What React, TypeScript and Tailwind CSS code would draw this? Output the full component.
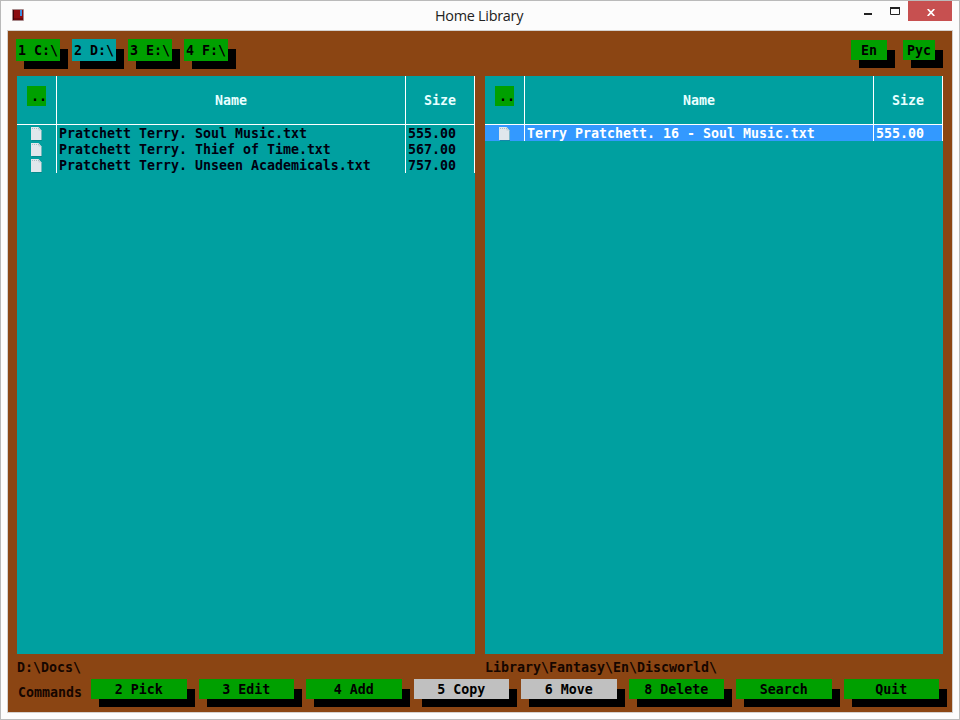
type Row = { name: string; size: string; selected?: boolean };

function KeyButton({ label, face, shade, color }: { label: string; face: string; shade: string; color: string }) {
  return (
    <button className={`relative block ${face}`}>
      <span className={`absolute left-2 top-[10px] w-full bg-black ${shade}`} />
      <span className={`relative flex h-full w-full items-center justify-center whitespace-pre pt-0.5 ${color}`}>{label}</span>
    </button>
  );
}

function FileIcon() {
  return (
    <svg width="13" height="14" viewBox="0 0 13 14" className="ml-[13px] mt-0.5">
      <path d="M2 2h8l2 2v10H2z" fill="#087c80" opacity=".65" />
      <path d="M1 0h7.5L11.5 3.5V13H1z" fill="#e0e7ec" />
      <path d="M8.5 0 11.5 3.5H8.5z" fill="#c4d2d8" />
      <path d="M2 1.5h7" stroke="#a9bcc2" strokeDasharray="1 1" />
    </svg>
  );
}

function Panel({ rows }: { rows: Row[] }) {
  return (
    <section className="h-[578px] w-[458px] bg-[#00a0a0]">
      <div className="grid h-[49px] grid-cols-[40px_349px_69px] border-b border-white text-[#e8ffff]">
        <div className="border-r border-white pl-[10px] pt-[10px]">
          <button className="block h-5 w-[19px] whitespace-pre bg-[#00a000] pl-[4px] text-left leading-5 text-black"><span className="block h-5 w-4 pt-px leading-[19px]">..</span></button>
        </div>
        <div className="border-r border-white pt-px text-center leading-[48px]">Name</div>
        <div className="border-r border-white pt-px text-center leading-[48px]">Size</div>
      </div>
      {rows.map((r) => (
        <div key={r.name} className={`grid h-4 grid-cols-[40px_349px_69px] leading-[17px] ${r.selected ? "bg-[#3399ff] text-white" : "text-[#000010]"}`}>
          <div className="h-4 border-r border-white"><FileIcon /></div>
          <div className="h-4 whitespace-pre border-r border-white pl-[2px]">{r.name}</div>
          <div className="h-4 border-r border-white pl-[2px]">{r.size}</div>
        </div>
      ))}
    </section>
  );
}

const drives = ["1 C:\\", "2 D:\\", "3 E:\\", "4 F:\\"];
const commands = ["2 Pick", "3 Edit", "4 Add", "5 Copy", "6 Move", "8 Delete", "Search", "Quit"];

const leftRows: Row[] = [
  { name: "Pratchett Terry. Soul Music.txt", size: "555.00" },
  { name: "Pratchett Terry. Thief of Time.txt", size: "567.00" },
  { name: "Pratchett Terry. Unseen Academicals.txt", size: "757.00" },
];
const rightRows: Row[] = [{ name: "Terry Pratchett. 16 - Soul Music.txt", size: "555.00", selected: true }];

export default function App() {
  return (
    <div className="h-[720px] w-[960px] overflow-hidden border border-[#bababa] bg-[#fcfcfc]">
      <header className="flex h-[29px] items-start">
        <svg width="12" height="12" viewBox="0 0 12 12" className="ml-[11px] mt-2 shrink-0">
          <rect width="12" height="12" rx="1" fill="#a88a8c" />
          <rect x="1" y="1" width="10" height="10" fill="#8c0c10" />
          <rect x="1" y="1" width="1" height="10" fill="#39060b" />
          <rect x="2" y="9" width="9" height="2" fill="#6e080c" />
          <rect x="8" y="1" width="2" height="6" fill="#3c8ee0" />
        </svg>
        <h1 className="flex-1 pl-[411px] pt-[5px] font-['Open_Sans','Noto_Sans',sans-serif] text-[14.4px] leading-5 tracking-[-0.27px] text-[#222]">Home Library</h1>
        <svg width="44" height="20" viewBox="0 0 44 20" className="shrink-0">
          <path d="M0 12h8v2H0z" fill="#222" />
          <path d="M26.5 7v6.5h9V7z" fill="none" stroke="#222" />
          <path d="M26 6h10v2H26z" fill="#222" />
        </svg>
        <button className="flex h-5 w-[44px] shrink-0 items-center justify-center bg-[#c75050] pl-px">
          <svg width="8" height="7" viewBox="0 0 8 7" className="mt-0.5">
            <path d="M.7 0 7.3 7M7.3 0 .7 7" stroke="white" strokeWidth="1.7" />
          </svg>
        </button>
        <span className="w-[7px] shrink-0" />
      </header>
      <main className="ml-[6px] flex h-[683px] w-[946px] flex-col border border-[#d4d0cd] bg-[#8b4513] font-['DejaVu_Sans_Mono',monospace] text-[13.29px] font-bold leading-4">
        <div className="flex h-[45px] items-start justify-between pl-2 pr-[17px] pt-2">
          <nav className="flex gap-3">
            {drives.map((d, i) => (
              <KeyButton key={d} label={d} face="h-[22px] w-[44px]" shade="h-5" color={i === 1 ? "bg-[#00a0a0]" : "bg-[#00a000]"} />
            ))}
          </nav>
          <div className="flex gap-4 pt-px">
            <KeyButton label="En" face="h-5 w-9" shade="h-[18px]" color="bg-[#00a000]" />
            <KeyButton label="Рус" face="h-5 w-8" shade="h-[18px]" color="bg-[#00a000]" />
          </div>
        </div>
        <div className="flex gap-[10px] pl-[9px]">
          <Panel rows={leftRows} />
          <Panel rows={rightRows} />
        </div>
        <div className="flex h-[25px] gap-[10px] pl-[9px] pt-[5px] leading-[18px] text-[#150600]">
          <span className="w-[458px]">D:\Docs\</span>
          <span className="w-[458px]">Library\Fantasy\En\Discworld\</span>
        </div>
        <footer className="flex pl-[10px]">
          <span className="w-[73px] shrink-0 pt-[5px] leading-[18px] text-[#150600]">Commands</span>
          <div className="grid w-[848px] shrink-0 grid-cols-8 gap-3">
            {commands.map((c, i) => (
              <KeyButton key={c} label={c} face="h-5 w-full" shade="h-[18px]" color={i === 3 || i === 4 ? "bg-[#c0c0c0]" : "bg-[#00a000]"} />
            ))}
          </div>
        </footer>
      </main>
    </div>
  );
}
